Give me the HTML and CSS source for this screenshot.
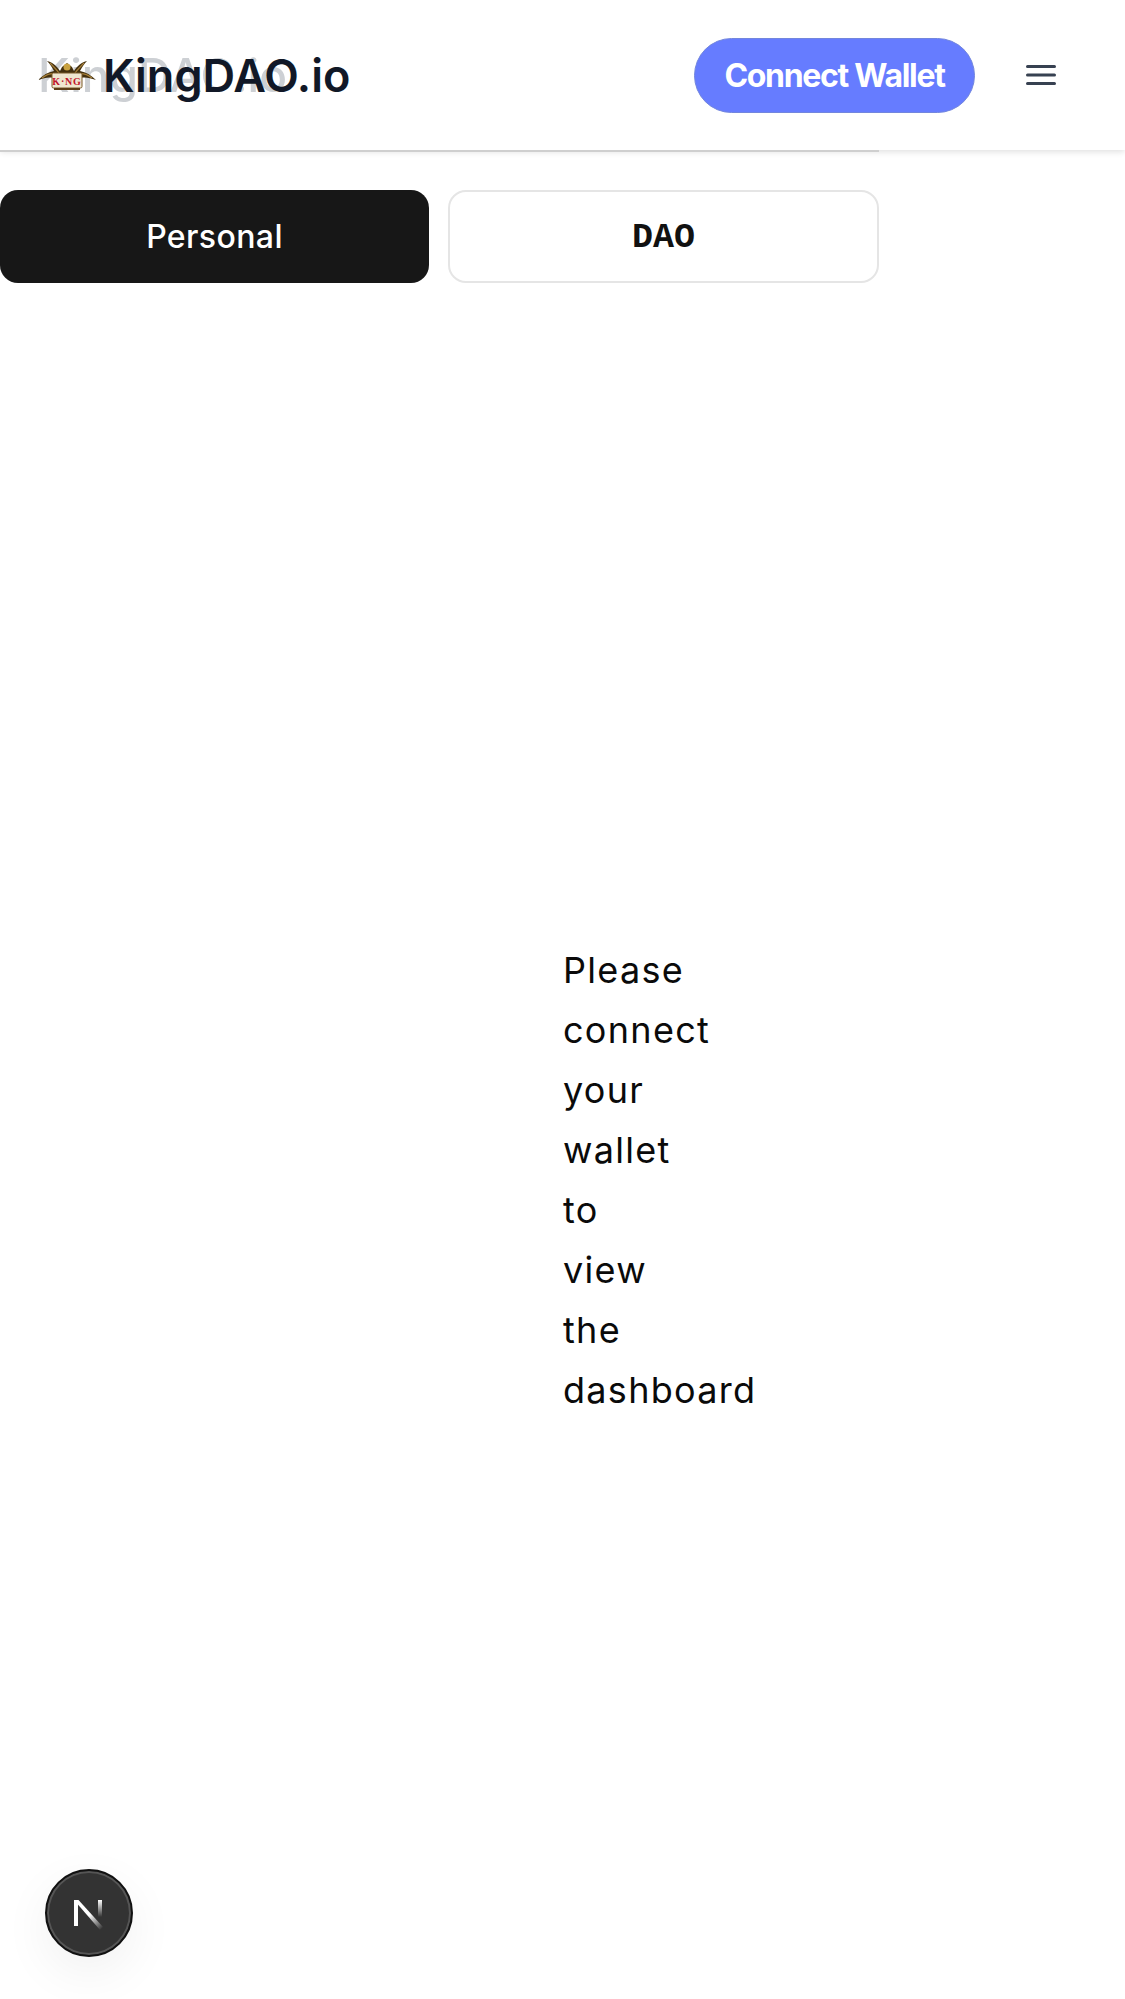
FILE: index.html
```html
<!DOCTYPE html>
<html lang="en">
<head>
<meta charset="utf-8">
<title>KingDAO.io</title>
<link rel="stylesheet" href="styles.css">
</head>
<body>
<header class="topbar">
  <div class="brand">
    <span class="brand-ghost">KingDAO.io</span>
    <svg class="brand-logo" width="58" height="34" viewBox="0 0 58 34">
      <path d="M0 22 C5 17 10 14 16 13 C14 9 12 6 9 3 C14 4 19 8 22 13 L24 9 L29 5 L34 9 L36 13 C39 8 44 4 49 3 C46 6 44 9 42 13 C48 14 53 17 58 22 C52 20 47 19 43 20 L15 20 C11 19 6 20 0 22 Z" fill="#43300f"/>
      <path d="M4 20 C9 16 14 15 19 16 M54 20 C49 16 44 15 39 16 M12 5 C15 8 18 11 21 15 M46 5 C43 8 40 11 37 15" stroke="#a57e38" stroke-width="1.200" fill="none"/>
      <circle cx="29" cy="9" r="3.500" fill="#c9a23f"/>
      <rect x="14" y="15" width="30" height="15" rx="1.500" fill="#efe6d0" stroke="#7b5a2a" stroke-width="1"/>
      <path d="M16 31 H42" stroke="#5c3d17" stroke-width="2"/>
      <text class="brand-logo-text" x="29" y="26.500">K·NG</text>
    </svg>
    <span class="brand-name">KingDAO.io</span>
  </div>
  <div class="actions">
    <button class="connect">Connect Wallet</button>
    <svg class="menu" width="30" height="24" viewBox="0 0 30 24">
      <path d="M1.500 3.500 H28.500 M1.500 12 H28.500 M1.500 20.500 H28.500" stroke="#374151" stroke-width="3" stroke-linecap="round"/>
    </svg>
  </div>
</header>
<div class="content">
  <div class="tabs">
    <button class="tab tab-active">Personal</button>
    <button class="tab tab-idle">DAO</button>
  </div>
  <main class="notice">
    <p class="notice-text">Please connect your wallet to view the dashboard</p>
  </main>
</div>
<button class="next-badge" aria-label="Next.js dev tools">
  <svg width="36" height="40" viewBox="0 0 36 40">
    <defs>
      <linearGradient id="nfade" gradientUnits="userSpaceOnUse" x1="3" y1="5" x2="31" y2="36">
        <stop offset="0.550" stop-color="#fff"/>
        <stop offset="1" stop-color="#fff" stop-opacity="0"/>
      </linearGradient>
      <linearGradient id="nfade2" x1="0" y1="0" x2="0" y2="1">
        <stop offset="0" stop-color="#fff"/>
        <stop offset="1" stop-color="#fff" stop-opacity="0"/>
      </linearGradient>
    </defs>
    <rect x="3" y="7" width="4" height="26" fill="#fff"/>
    <path d="M3 7 H7.500 L32 34 L29 37 Z" fill="url(#nfade)"/>
    <rect x="27" y="7" width="4" height="17" fill="url(#nfade2)"/>
  </svg>
</button>
</body>
</html>
```
FILE: styles.css
```css
* { box-sizing: border-box; }
html, body { margin: 0; padding: 0; }
body {
  width: 1125px;
  height: 1999px;
  overflow: hidden;
  background: #fff;
  position: relative;
  font-family: "Inter", "Liberation Sans", sans-serif;
}
.topbar {
  height: 150px;
  display: flex;
  align-items: center;
  justify-content: space-between;
  padding: 0 69px 0 38px;
  background: #fff;
  box-shadow: 0 2px 6px rgba(0,0,0,.12);
  position: relative;
}
.topbar::after {
  content: "";
  position: absolute;
  left: 0;
  top: 150px;
  width: 879px;
  height: 2px;
  background: #cfcfcf;
}
.brand { display: flex; align-items: center; gap: 7px; position: relative; }
.brand-ghost {
  position: absolute;
  left: 0;
  top: -1px;
  font-size: 46px;
  font-weight: 500;
  color: #cdd0d4;
  filter: blur(.6px);
  white-space: nowrap;
}
.brand-logo { position: relative; flex: none; }
.brand-logo-text {
  font-family: "Liberation Serif", serif;
  font-size: 10px;
  font-weight: 700;
  fill: #c0142a;
  text-anchor: middle;
  letter-spacing: .8px;
}
.brand-name {
  position: relative;
  font-size: 45px;
  font-weight: 600;
  color: #111827;
  white-space: nowrap;
}
.actions { display: flex; align-items: center; gap: 51px; }
.connect {
  width: 281px;
  height: 75px;
  border: 1px solid #7286dd;
  border-radius: 38px;
  background: #667cff;
  color: #fff;
  font-family: "Inter", sans-serif;
  font-size: 32px;
  font-weight: 700;
  letter-spacing: -1.300px;
}
.content { width: 879px; }
.tabs {
  display: grid;
  grid-template-columns: 429px 431px;
  gap: 19px;
  padding-top: 40px;
}
.tab {
  height: 93px;
  border-radius: 18px;
  font-size: 32px;
}
.tab-active {
  background: #171717;
  border: 0;
  color: #fff;
  font-family: "Inter", sans-serif;
  font-weight: 500;
  letter-spacing: .4px;
}
.tab-idle {
  background: #fff;
  border: 2px solid #e5e5e5;
  color: #111;
  font-family: "Liberation Mono", monospace;
  font-size: 35px;
  font-weight: 700;
  padding-top: 4px;
}
.notice { padding: 657px 0 0 563px; }
.notice-text {
  margin: 0;
  width: 220px;
  font-size: 36px;
  line-height: 60px;
  color: #0a0a0a;
  letter-spacing: 1.300px;
  word-spacing: 300px;
}
.next-badge {
  position: absolute;
  left: 45px;
  top: 1869px;
  width: 88px;
  height: 88px;
  padding: 0;
  border-radius: 50%;
  background: #333;
  border: 2px solid #111;
  box-shadow: inset 0 0 0 2px #555, 0 16px 50px rgba(0,0,0,.06);
  display: flex;
  align-items: center;
  justify-content: center;
}
```
